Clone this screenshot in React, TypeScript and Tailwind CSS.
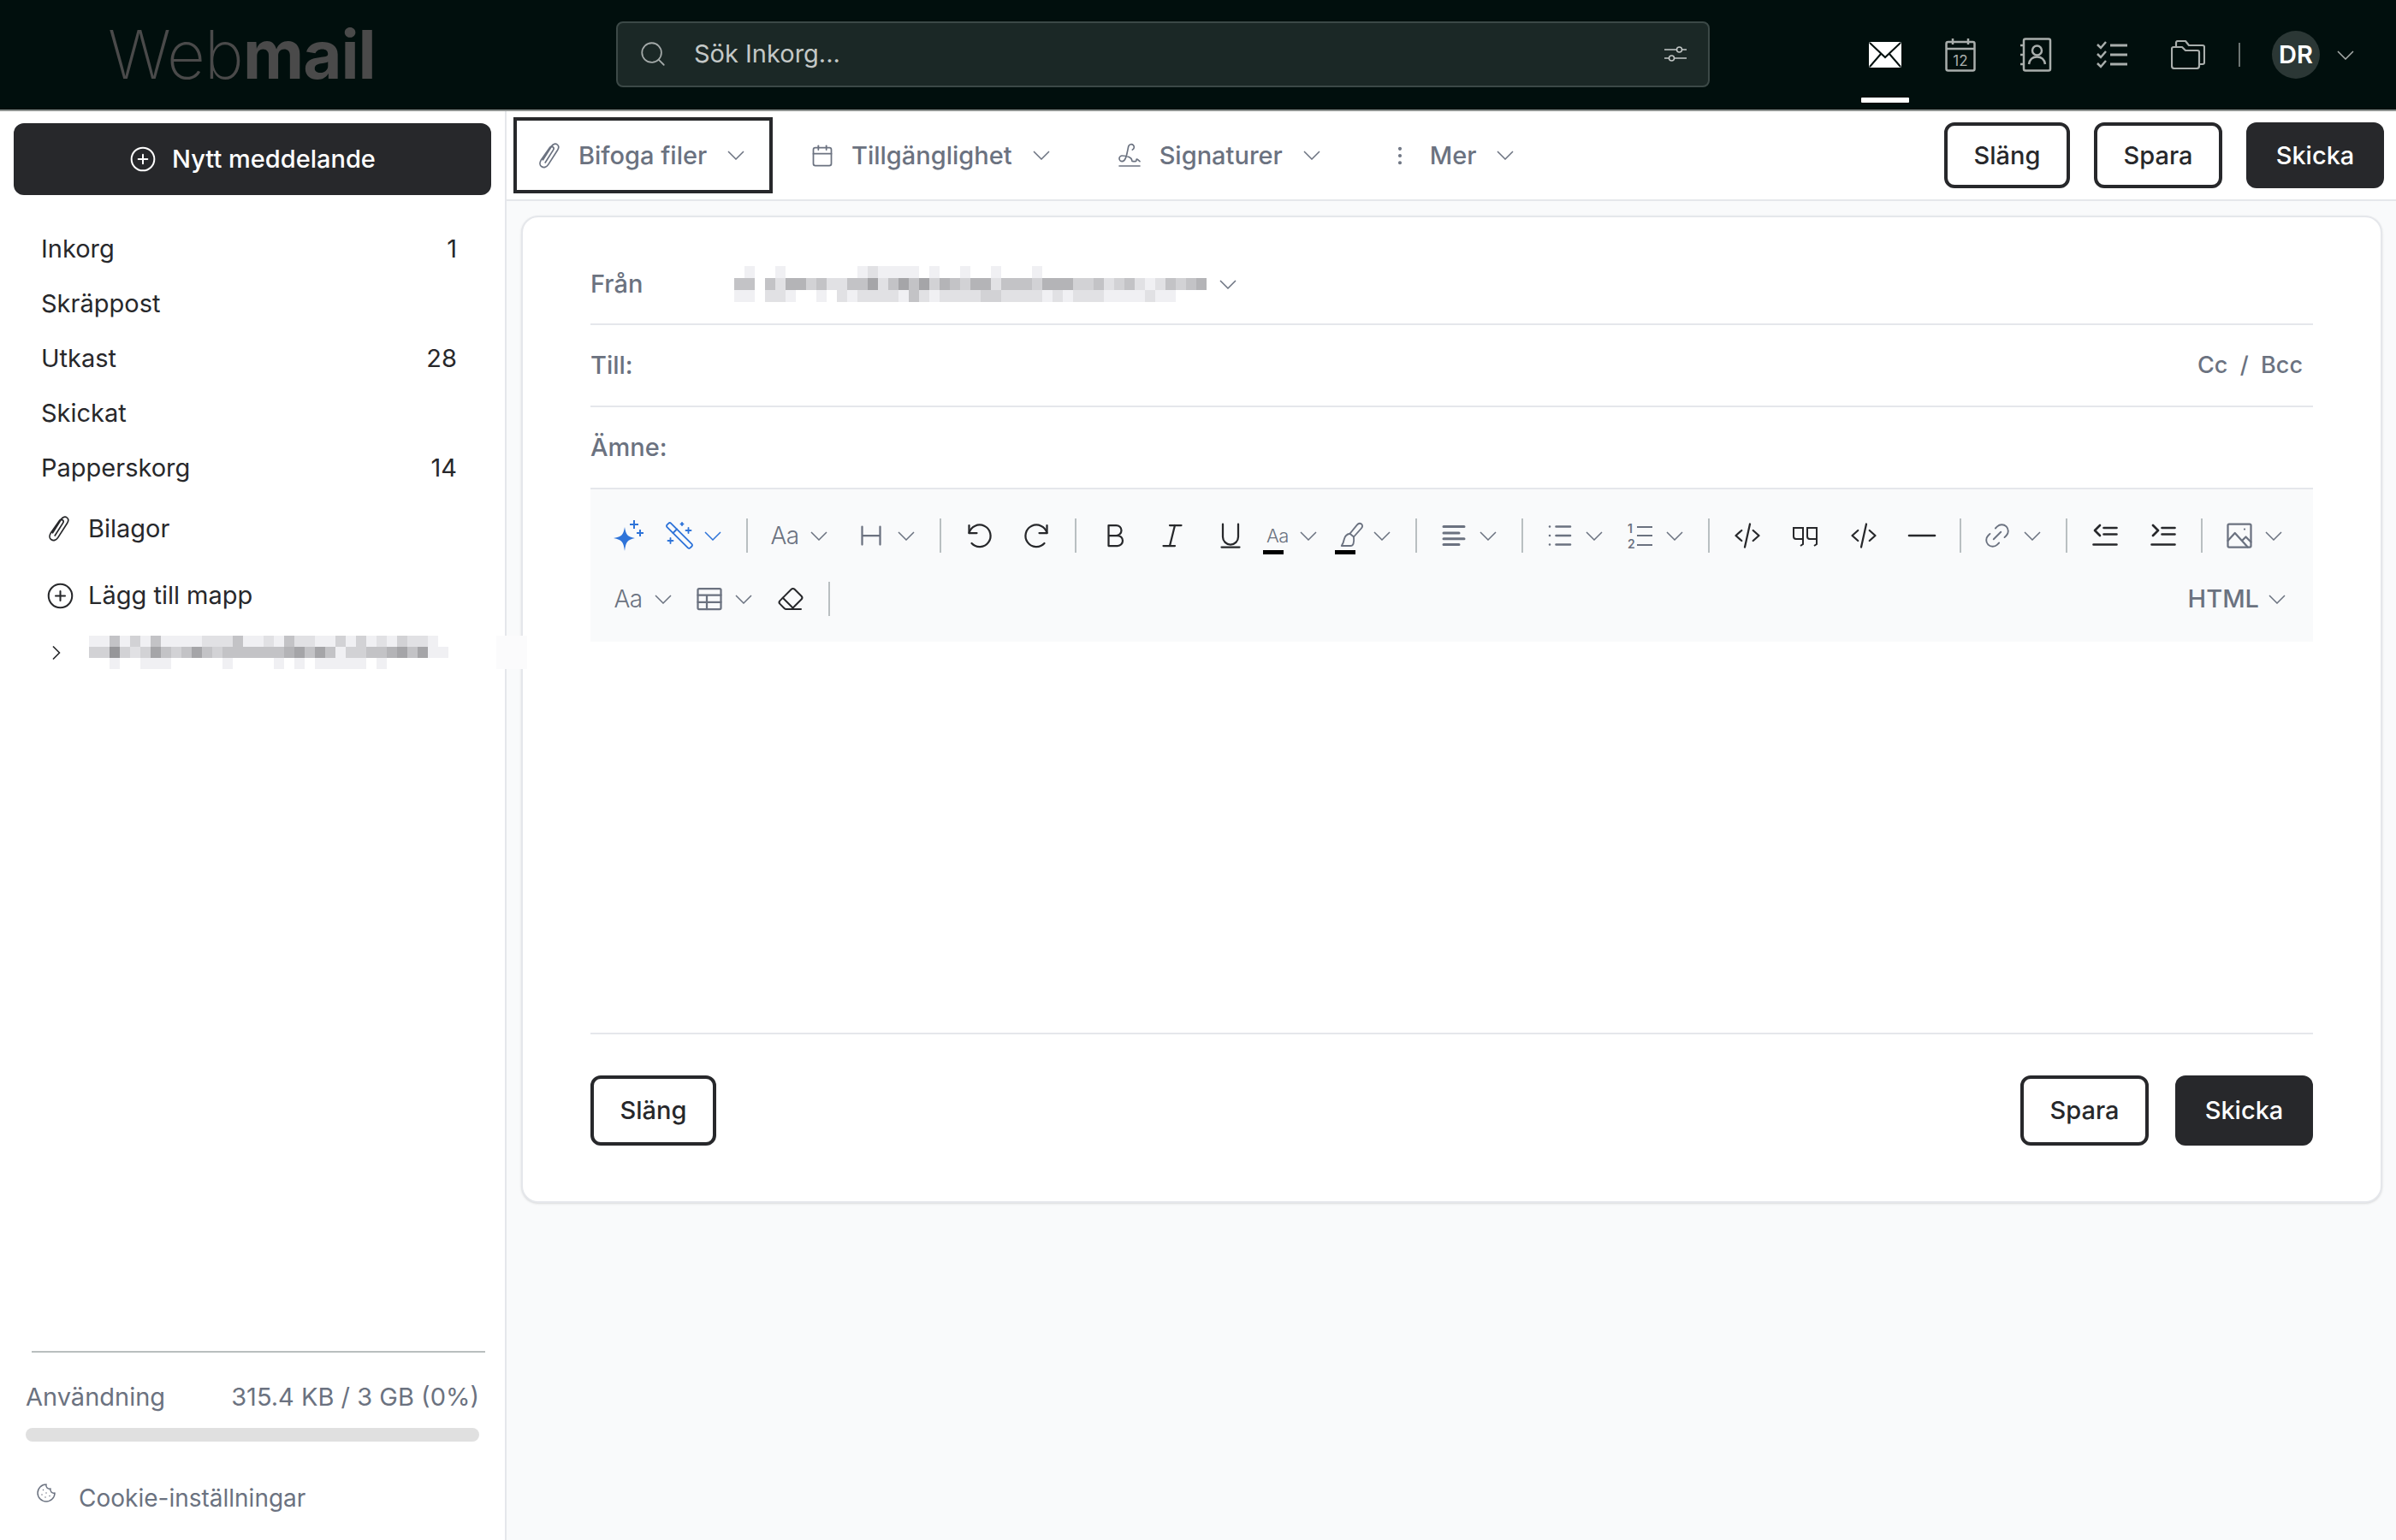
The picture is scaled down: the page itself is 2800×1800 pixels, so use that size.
import React from 'react';
import {
  Search, Calendar, Signature, EllipsisVertical, CirclePlus, ChevronRight, Cookie,
  WandSparkles, Link2, Eraser, Paperclip,
} from 'lucide-react';

const FONT = "font-['Inter','Noto_Sans',sans-serif]";

// pixelated (blurred out) address blocks: one hex digit of darkness per cell
const FROM_BLUR = [
  '0100100000001211110100100100010000000000000000',
  '4404255342244624646354355244435553342342124345',
  '1102210010212222142122223322221212221111211000',
];
const FOLDER_BLUR = [
  '11413141111222411214221131312132210',
  '33732364346434444445646413344564611',
  '00100111000001000010101111101000000',
];

const Blur = ({ rows, cell, height }: { rows: string[]; cell: number; height: number }) => (
  <div className="flex flex-col">
    {rows.map((row, r) => (
      <div key={r} className="flex">
        {row.split('').map((d, i) => {
          const v = 255 - parseInt(d, 16) * 15;
          return <div key={i} style={{ width: cell, height, backgroundColor: `rgb(${v},${v},${v + 3})` }} />;
        })}
      </div>
    ))}
  </div>
);

const Chevron = ({ className = '' }: { className?: string }) => (
  <svg viewBox="0 0 20 11" className={`w-5 h-[11px] shrink-0 ${className}`} fill="none" stroke="currentColor" strokeWidth="1.5">
    <path d="M1 1l9 9 9-9" />
  </svg>
);

const Svg = ({ children, className = 'w-9 h-9', fill = 'none', width = 1.5 }: { children: React.ReactNode; className?: string; fill?: string; width?: number }) => (
  <svg viewBox="0 0 24 24" className={`shrink-0 ${className}`} fill={fill} stroke="currentColor" strokeWidth={width} strokeLinecap="round" strokeLinejoin="round">
    {children}
  </svg>
);

const Clip = ({ className }: { className: string }) => (
  <svg viewBox="0 0 24 30" className={className} fill="none" stroke="currentColor" strokeWidth="1.6" strokeLinecap="round">
    <path d="M5 19.5 14.5 4.5c1.6-2.5 4.3-3 6-1.8 1.8 1.2 2 3.6.6 5.9L10.8 24.7c-2 3-5 3.7-7.2 2.3-2.2-1.400-2.500-4.300-.8-7L12.300 6.300c.9-1.300 2.400-1.600 3.500-.9 1.100.7 1.200 2.100.4 3.400L7.500 22.500" />
  </svg>
);

const Sep = ({ className = '' }: { className?: string }) => <div className={`w-0.5 h-10 bg-[#b9bfc1] shrink-0 ${className}`} />;

const Aa = () => <span className="w-9 text-center text-[28px] font-light text-[#6b7280] leading-none shrink-0 tracking-tight">Aa</span>;

const Tool = ({ className = '', children, tone = 'text-[#6b7280]' }: { className?: string; children: React.ReactNode; tone?: string }) => (
  <div className={`flex items-center justify-center w-9 h-10 shrink-0 ${tone} ${className}`}>{children}</div>
);

const DARK = 'text-[#27282b]';

const DarkBtn = ({ label, className = '' }: { label: string; className?: string }) => (
  <button className={`flex items-center justify-center bg-[#27282b] text-white rounded-xl text-[29px] font-medium ${className}`}>{label}</button>
);

const LineBtn = ({ label, className = '' }: { label: string; className?: string }) => (
  <button className={`flex items-center justify-center border-4 border-[#27282b] text-[#27282b] rounded-xl text-[29px] font-medium ${className}`}>{label}</button>
);

const FOLDERS: [string, string][] = [
  ['Inkorg', '1'], ['Skräppost', ''], ['Utkast', '28'], ['Skickat', ''], ['Papperskorg', '14'],
];

const Header = () => (
  <header className="h-[130px] shrink-0 flex items-center bg-[#010f0d] border-b-2 border-[#8f9391]">
    <div className="w-[720px] pl-[126px] text-[78px] leading-none text-[#4a4a4a] flex tracking-[-1px]">
      <span className="font-extralight">Web</span><span className="font-bold">mail</span>
    </div>
    <div className="w-[1278px] h-[77px] -mt-[2px] flex items-center bg-[#1b2826] border-2 border-[#3c4947] rounded-lg pl-[24px] pr-[24px]">
      <Search className="w-[34px] h-[34px] text-[#a3a9a8]" strokeWidth={1.25} />
      <span className="ml-[31px] text-[29px] text-[#c4c8c7]">Sök Inkorg...</span>
      <svg viewBox="0 0 28 24" className="ml-auto w-7 h-6 text-[#c4c8c7]" fill="none" stroke="currentColor" strokeWidth="1.5">
        <path d="M1 7h14M22 7h5M1 17h5M13 17h14" />
        <circle cx="18.500" cy="7" r="3" />
        <circle cx="9.500" cy="17" r="3" />
      </svg>
    </div>
    <div className="flex items-center ml-[186px]">
      <div className="relative w-[38px] h-[30px]">
        <svg viewBox="0 0 38 30" className="w-[38px] h-[30px]">
          <rect width="38" height="30" rx="2" fill="#fff" />
          <path d="M1 1l18 17L37 1M1 29l13-15M37 29 24 14" fill="none" stroke="#010f0d" strokeWidth="2" />
        </svg>
        <div className="absolute left-[-9px] top-[65px] w-[56px] h-[6px] rounded-[1px] bg-white" />
      </div>
      <svg viewBox="0 0 36 40" className="ml-[51px] w-9 h-10 text-[#a9aeac]" fill="none" stroke="currentColor" strokeWidth="2.500">
        <rect x="1.500" y="5" width="33" height="33.500" rx="2" />
        <path d="M1.500 13h33M9 1v7M27 1v7" />
        <text x="18" y="33" textAnchor="middle" fontSize="17" fill="currentColor" stroke="none" fontFamily="Inter">12</text>
      </svg>
      <svg viewBox="0 0 38 40" className="ml-[51px] w-[38px] h-10 text-[#a9aeac]" fill="none" stroke="currentColor" strokeWidth="2.500">
        <rect x="5" y="1.500" width="31" height="37" rx="2" />
        <path d="M1 9h4M1 20h4M1 31h4" />
        <circle cx="20.500" cy="15" r="5.500" />
        <path d="M11 31c1-6 5-8.500 9.500-8.500S29 25 30 31" />
      </svg>
      <svg viewBox="0 0 36 32" className="ml-[52px] w-9 h-8 text-[#a9aeac]" fill="none" stroke="currentColor" strokeWidth="2.500">
        <path d="M1 4l4 4 6-7M1 15l4 4 6-7M1 26l4 4 6-7" />
        <path d="M16 5h20M16 16h20M16 27h20" strokeWidth="3" />
      </svg>
      <svg viewBox="0 0 40 34" className="ml-[51px] w-10 h-[34px] text-[#a9aeac]" fill="none" stroke="currentColor" strokeWidth="2.200" strokeLinejoin="round">
        <path d="M1 10v20a3 3 0 0 0 3 3h26a3 3 0 0 0 3-3V14a2 2 0 0 0-2-2H17l-4-4H3a2 2 0 0 0-2 2z" />
        <path d="M6 8V3a2 2 0 0 1 2-2h9l4 5h16a2 2 0 0 1 2 2v18a2 2 0 0 1-2 2h-4" />
      </svg>
      <div className="ml-[39px] w-0.5 h-7 bg-[#6d7573]" />
      <div className="ml-[37px] w-14 h-14 rounded-full bg-[#2b3735] flex items-center justify-center text-white text-[29px] font-semibold">DR</div>
      <Chevron className="ml-[20px] text-[#a9aeac]" />
    </div>
  </header>
);

const Sidebar = () => (
  <aside className="relative w-[592px] shrink-0 flex flex-col bg-white border-r-2 border-[#e5e7eb]">
    <DarkBtn label="" className="hidden" />
    <button className="mt-[14px] ml-4 w-[558px] h-[84px] flex items-center justify-center gap-[18px] bg-[#27282b] text-white rounded-xl text-[29px] font-medium">
      <CirclePlus className="w-8 h-8" strokeWidth={1.5} />
      Nytt meddelande
    </button>
    <nav className="mt-[31px] pl-[48px] pr-[56px] flex flex-col text-[#27282b] text-[29px]">
      {FOLDERS.map(([name, count]) => (
        <div key={name} className="h-16 flex items-center justify-between">
          <span>{name}</span>
          <span>{count}</span>
        </div>
      ))}
    </nav>
    <div className="mt-[7px] h-[64px] pl-[56px] flex items-center text-[#27282b] text-[29px]">
      <Clip className="w-[26px] h-[32px] text-[#27282b]" />
      <span className="ml-[21px]">Bilagor</span>
    </div>
    <div className="mt-[14px] h-[64px] pl-[54px] flex items-center text-[#27282b] text-[29px]">
      <CirclePlus className="w-[33px] h-[33px]" strokeWidth={1.5} />
      <span className="ml-[16px]">Lägg till mapp</span>
    </div>
    <div className="mt-[15px] pl-[56px] flex items-center">
      <ChevronRight className="w-7 h-9 text-[#27282b] -ml-1" strokeWidth={1.5} />
      <div className="ml-[24px]">
        <Blur rows={FOLDER_BLUR} cell={12} height={13} />
      </div>
      <div className="absolute left-[580px] w-[36px] h-[39px] bg-[#fbfbfc]" />
    </div>
    <div className="mt-auto flex flex-col pb-[28px]">
      <div className="ml-[37px] w-[530px] h-0.5 bg-[#b9bfbf]" />
      <div className="mt-[30px] ml-[30px] w-[530px] flex justify-between text-[#6b7280] text-[29px]">
        <span>Användning</span>
        <span>315.4 KB / 3 GB (0%)</span>
      </div>
      <div className="mt-[15px] ml-[30px] w-[530px] h-4 rounded-full bg-[#e0e0e0]" />
      <div className="mt-[45px] ml-[42px] flex items-center text-[#6b7280] text-[28px]">
        <Cookie className="w-6 h-6 -mt-3" strokeWidth={1.5} />
        <span className="ml-[26px]">Cookie-inställningar</span>
      </div>
    </div>
  </aside>
);

const ActionBar = () => (
  <div className="h-[105px] shrink-0 flex items-center bg-white border-b-2 border-[#e5e7eb] text-[#6b7280] text-[29px] font-medium pl-2 pr-[14px]">
    <div className="w-[303px] h-[89px] flex items-center border-4 border-[#27282b] pl-[25px]">
      <Clip className="w-[26px] h-[32px]" />
      <span className="ml-[21px]">Bifoga filer</span>
      <Chevron className="ml-[22px] w-6 h-3" />
    </div>
    <Calendar className="ml-[44px] w-7 h-8" strokeWidth={1.5} />
    <span className="ml-5">Tillgänglighet</span>
    <Chevron className="ml-[22px] w-6 h-3" />
    <Signature className="ml-[75px] w-8 h-8" strokeWidth={1.25} />
    <span className="ml-[19px]">Signaturer</span>
    <Chevron className="ml-[22px] w-6 h-3" />
    <EllipsisVertical className="ml-[77px] w-7 h-7" strokeWidth={1.5} />
    <span className="ml-[21px]">Mer</span>
    <Chevron className="ml-[21px] w-6 h-3" />
    <LineBtn label="Släng" className="ml-auto w-[147px] h-[77px]" />
    <LineBtn label="Spara" className="ml-[28px] w-[150px] h-[77px]" />
    <DarkBtn label="Skicka" className="ml-[28px] w-[161px] h-[77px]" />
  </div>
);

const EditorToolbar = () => (
  <div className="h-[178px] shrink-0 flex flex-col bg-[#f9fafb] pt-[17px]">
    <div className="h-[74px] flex items-center pl-[26px]">
      <Tool tone="text-[#2f74d9]">
        <svg viewBox="0 0 36 40" className="w-9 h-10" fill="currentColor">
          <path d="M14 10c1.500 9 3 11 12 13-9 2-10.500 4-12 15-1.500-11-3-13-13-15 10-2 11.500-4 13-13z" />
          <path d="M24 2h2v4h4v2h-4v4h-2V8h-4V6h4zM31 13h2v3h3v2h-3v3h-2v-3h-3v-2h3z" />
        </svg>
      </Tool>
      <Tool tone="text-[#2f74d9]" className="ml-6"><WandSparkles className="w-9 h-9 -scale-x-100" strokeWidth={1.25} /></Tool>
      <Chevron className="ml-[11px] text-[#2f74d9]" />
      <Sep className="ml-[29px]" />
      <Tool className="ml-[25px]"><Aa /></Tool>
      <Chevron className="ml-3 text-[#6b7280]" />
      <Tool className="ml-[33px]">
        <Svg><path d="M5 5v14M19 5v14M5 12h14" /></Svg>
      </Tool>
      <Chevron className="ml-[13px] text-[#6b7280]" />
      <Sep className="ml-[29px]" />
      <Tool tone={DARK} className="ml-[25px]">
        <Svg><path d="M5 4v6h6" /><path d="M5 10a8.500 8.500 0 1 1 2 8" /></Svg>
      </Tool>
      <Tool tone={DARK} className="ml-[34px]">
        <Svg><path d="M19 4v6h-6" /><path d="M19 10a8.500 8.500 0 1 0-2 8" /></Svg>
      </Tool>
      <Sep className="ml-[25px]" />
      <Tool tone={DARK} className="ml-[27px]">
        <Svg><path d="M7 4h6a4 4 0 0 1 0 8H7zM7 12h7a4 4 0 0 1 0 8H7z" /></Svg>
      </Tool>
      <Tool tone={DARK} className="ml-[31px]">
        <Svg><path d="M10 4h9M5 20h9M14 4l-4 16" /></Svg>
      </Tool>
      <Tool tone={DARK} className="ml-8">
        <Svg><path d="M6 3v10a6 6 0 0 0 12 0V3M5 21h14" /></Svg>
      </Tool>
      <div className="relative ml-[19px]">
        <Tool><span className="text-[22px] font-light tracking-tight">Aa</span></Tool>
        <div className="absolute left-[1px] top-[37px] w-6 h-[5px] bg-black" />
      </div>
      <Chevron className="ml-2 text-[#6b7280]" />
      <div className="relative ml-[22px]">
        <Tool>
          <Svg width={1.25}><path d="M20 3c-1-.8-2.500-.5-3.500.7l-5.500 6.800 3 2.500 5.800-6.500c1.200-1.300 1.200-2.700.2-3.500z" /><path d="M11 10.500c-3 .5-4 2-4.500 4.500-.4 2-1 3.500-2 5h7c2 0 3-2 2.500-7" /></Svg>
        </Tool>
        <div className="absolute left-[-1px] top-[37px] w-6 h-[5px] bg-black" />
      </div>
      <Chevron className="ml-2 text-[#6b7280]" />
      <Sep className="ml-[29px]" />
      <Tool className="ml-[25px]">
        <Svg width={2}><path d="M4 5h16M4 10h12M4 14.500h16M4 19h12" /></Svg>
      </Tool>
      <Chevron className="ml-3 text-[#6b7280]" />
      <Sep className="ml-[29px]" />
      <Tool className="ml-[25px]">
        <Svg width={1.75}><path d="M9 5h11M9 12h11M9 19h11M4 5h.01M4 12h.01M4 19h.01" /></Svg>
      </Tool>
      <Chevron className="ml-3 text-[#6b7280]" />
      <Tool className="ml-[26px]">
        <svg viewBox="0 0 30 32" className="w-[30px] h-8" fill="none" stroke="currentColor" strokeWidth="2">
          <path d="M11 6h18M11 16h18M11 27h18" />
          <text x="0" y="13" fontSize="14" fontWeight="600" fill="currentColor" stroke="none" fontFamily="Inter">1</text>
          <text x="0" y="31" fontSize="14" fontWeight="600" fill="currentColor" stroke="none" fontFamily="Inter">2</text>
        </svg>
      </Tool>
      <Chevron className="ml-3 text-[#6b7280]" />
      <Sep className="ml-[29px]" />
      <Tool tone={DARK} className="ml-[26px]">
        <Svg><path d="M7.500 8 3 12l4.500 4M16.500 8l4.500 4-4.500 4M14 3l-4 18" /></Svg>
      </Tool>
      <Tool tone={DARK} className="ml-8">
        <svg viewBox="0 0 32 32" className="w-8 h-8" fill="none" stroke="currentColor" strokeWidth="2">
          <path d="M13 20H5a3 3 0 0 1-3-3V7h11v19l-3 2M29 20h-8a3 3 0 0 1-3-3V7h11v19l-3 2" />
        </svg>
      </Tool>
      <Tool tone={DARK} className="ml-8">
        <Svg><path d="M7.500 8 3 12l4.500 4M16.500 8l4.500 4-4.500 4M14 3l-4 18" /></Svg>
      </Tool>
      <Tool tone={DARK} className="ml-8">
        <Svg width={1.75}><path d="M2 12h20" /></Svg>
      </Tool>
      <Sep className="ml-[26px]" />
      <Tool className="ml-6"><Link2 className="w-9 h-9 -rotate-45" strokeWidth={1.25} /></Tool>
      <Chevron className="ml-[13px] text-[#6b7280]" />
      <Sep className="ml-[29px]" />
      <Tool tone={DARK} className="ml-[26px]">
        <Svg width={1.75}><path d="M8 4 4 8l4 4M11 6h10M11 11h10M3 19h18" /></Svg>
      </Tool>
      <Tool tone={DARK} className="ml-8">
        <Svg width={1.75}><path d="m4 4 4 4-4 4M11 6h10M11 11h10M3 19h18" /></Svg>
      </Tool>
      <Sep className="ml-[26px]" />
      <Tool className="ml-[25px]">
        <Svg width={1.5}><rect x="3" y="3" width="18" height="18" rx="1" /><path d="m3 16 5.500-6 10 11M14 16l3-3 4 4M16 7h.01" /></Svg>
      </Tool>
      <Chevron className="ml-3 text-[#6b7280]" />
    </div>
    <div className="h-[74px] flex items-center pl-[26px] pr-8">
      <Tool><Aa /></Tool>
      <Chevron className="ml-[13px] text-[#6b7280]" />
      <Tool className="ml-[26px]">
        <Svg width={1.5}><rect x="3" y="4" width="18" height="16" rx="1" /><path d="M3 9h18M3 14.500h18M10 9v11" /></Svg>
      </Tool>
      <Chevron className="ml-3 text-[#6b7280]" />
      <Tool tone={DARK} className="ml-[27px]"><Eraser className="w-8 h-8" strokeWidth={1.5} /></Tool>
      <Sep className="ml-[26px]" />
      <span className="ml-auto text-[#6b7280] text-[29px] font-medium">HTML</span>
      <Chevron className="ml-[11px] text-[#6b7280]" />
    </div>
  </div>
);

const Compose = () => (
  <section className="mt-[17px] ml-[17px] w-[2175px] h-[1154px] flex flex-col bg-white border-2 border-[#e5e7eb] rounded-[20px] shadow-sm px-[79px] text-[#6b7280] text-[29px]">
    <div className="h-[126px] shrink-0 flex items-center pt-[32px] border-b-2 border-[#e5e7eb] font-medium">
      <span className="w-[168px]">Från</span>
      <Blur rows={FROM_BLUR} cell={12} height={14} />
      <Chevron className="ml-[15px] text-[#6b7280]" />
    </div>
    <div className="h-[96px] shrink-0 flex items-center justify-between border-b-2 border-[#e5e7eb] font-medium">
      <span>Till:</span>
      <span className="pr-3 text-[27px]">Cc&nbsp;&nbsp;/&nbsp;&nbsp;Bcc</span>
    </div>
    <div className="h-[96px] shrink-0 flex items-center border-b-2 border-[#e5e7eb] font-medium">Ämne:</div>
    <EditorToolbar />
    <div className="flex-1 border-b-2 border-[#e5e7eb]" />
    <div className="h-[195px] shrink-0 flex items-start pt-[48px]">
      <LineBtn label="Släng" className="w-[147px] h-[82px]" />
      <LineBtn label="Spara" className="ml-auto w-[150px] h-[82px]" />
      <DarkBtn label="Skicka" className="ml-[31px] w-[161px] h-[82px]" />
    </div>
  </section>
);

export default function App() {
  return (
    <div className={`w-[2800px] h-[1800px] flex flex-col overflow-hidden bg-white ${FONT}`}>
      <Header />
      <div className="flex-1 flex min-h-0">
        <Sidebar />
        <main className="flex-1 min-w-0 flex flex-col bg-[#f9fafb]">
          <ActionBar />
          <Compose />
        </main>
      </div>
    </div>
  );
}
